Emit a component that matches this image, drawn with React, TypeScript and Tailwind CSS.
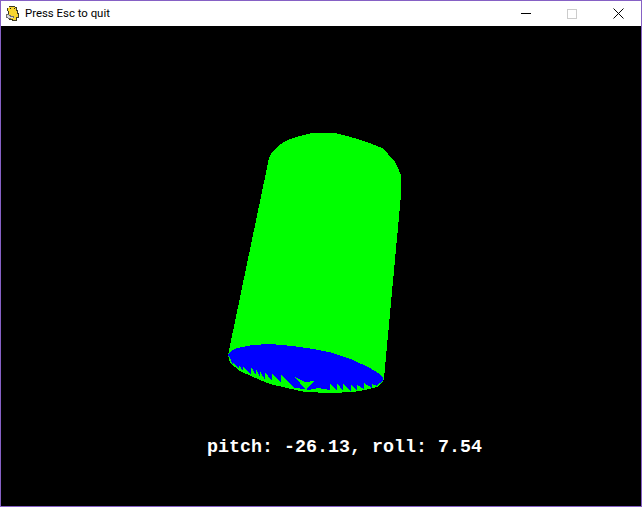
const BODY =
  '269,158 272,152 278,146 284,142 290,139 300,136 312,133 335,133 347,136 358,139 372,144 382,148 388,154 395,162 398,168 401,175 401,195 384,378 383,382 377,387 365,390 353,392 330,393 305,392 287,388 270,384 253,377 240,371 230,363 228,355'

const LID =
  '228,355 231,351 237,348 253,345 270,344 292,346 313,349 333,353 353,360 370,368 380,374 383,378 383,381 ' +
  '377,385 377,386 372,384 372,388 364,383 364,389 357,385 357,390 351,385 351,391 343,384 343,391 337,383 337,391 330,383 330,390 ' +
  '318,388 308,390 305,389 295,388 281,375 281,383 272,373 272,381 265,372 265,380 260,371 260,377 256,369 256,375 251,367 251,374 ' +
  '243,367 243,371 239,365 239,369 233,362 233,365 230,358'

function SnakeIcon() {
  return (
    <svg width="16" height="16" viewBox="0 0 16 16" shapeRendering="crispEdges">
      <path d="M4 0h6v1h2v3h1v3h1v5h-2v3H7v-1H4v-2H3V5H2V2h2z" fill="#3d3a22" />
      <path d="M4 1h6v1h1v3h1v3h1v3h-2v3H8v-1H5v-2H4V5H3V2h1z" fill="#f7d52e" />
      <path d="M5 2h1v1H5zM9 2h1v1H9z" fill="#222222" />
      <path d="M1 8h3v1h2v1h3v2H6v1H3v-1H1z" fill="#6f6f6f" />
      <path d="M2 9h2v1h1v1h3v1H3v-1H2z" fill="#d8d8d8" />
    </svg>
  )
}

export default function App() {
  return (
    <div className="w-[643px] h-[509px] bg-white">
      <div className="flex flex-col w-[642px] h-[507px] border border-[#8661c5] bg-white">
        <header className="flex items-center h-[25px] shrink-0 pl-1">
          <SnakeIcon />
          <span className="ml-1 text-[11.4px] text-black font-['Roboto',sans-serif]">
            Press Esc to quit
          </span>
          <div className="flex items-center ml-auto h-full">
            <div className="flex justify-center items-center w-[46px] h-full">
              <span className="w-2.5 h-px bg-black" />
            </div>
            <div className="flex justify-center items-center w-[46px] h-full">
              <span className="w-2.5 h-2.5 border border-[#cccccc]" />
            </div>
            <div className="flex justify-center items-center w-[46px] h-full">
              <svg width="11" height="11" viewBox="0 0 11 11" stroke="#000" strokeWidth="1">
                <path d="M0.5 0.5l10 10M10.5 0.5l-10 10" />
              </svg>
            </div>
          </div>
        </header>

        <main className="relative flex-1 bg-black">
          <svg width="640" height="480" viewBox="1 26 640 480" shapeRendering="crispEdges" className="block">
            <polygon points={BODY} fill="#00ff00" />
            <polygon points={LID} fill="#0000ff" />
            <polygon points="295,377 305,382 314,381 307,389 305,389" fill="#00ff00" />
          </svg>
          <span className="absolute left-[206px] top-[411px] text-[18.33px] leading-[22px] font-bold text-white whitespace-pre font-['Liberation_Mono',monospace]">
            pitch: -26.13, roll: 7.54
          </span>
        </main>
      </div>
    </div>
  )
}
